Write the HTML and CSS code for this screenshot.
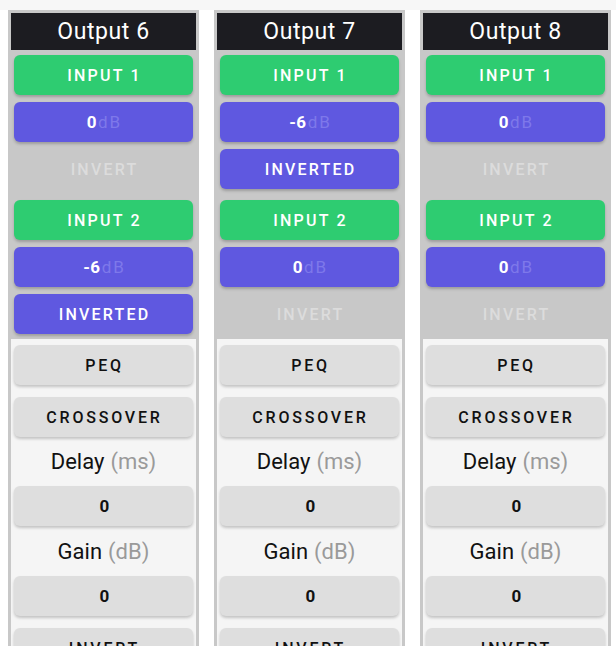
FILE: index.html
```html
<!DOCTYPE html>
<html>
<head>
<meta charset="utf-8">
<link rel="stylesheet" href="styles.css">
</head>
<body>
<div class="topstrip"></div>
<div class="outputs">
  <div class="col">
    <div class="title">Output 6</div>
    <div class="routing">
      <div class="group">
        <div class="btn green">INPUT 1</div>
        <div class="btn purple"><b>0</b><span class="unit">dB</span></div>
        <div class="btn off">INVERT</div>
      </div>
      <div class="group">
        <div class="btn green">INPUT 2</div>
        <div class="btn purple"><b>-6</b><span class="unit">dB</span></div>
        <div class="btn purple">INVERTED</div>
      </div>
    </div>
    <div class="proc">
      <div class="btn grey">PEQ</div>
      <div class="btn grey">CROSSOVER</div>
      <div class="label">Delay <span class="muted">(ms)</span></div>
      <div class="btn grey num">0</div>
      <div class="label">Gain <span class="muted">(dB)</span></div>
      <div class="btn grey num">0</div>
      <div class="btn grey last">INVERT</div>
    </div>
  </div>
  <div class="col">
    <div class="title">Output 7</div>
    <div class="routing">
      <div class="group">
        <div class="btn green">INPUT 1</div>
        <div class="btn purple"><b>-6</b><span class="unit">dB</span></div>
        <div class="btn purple">INVERTED</div>
      </div>
      <div class="group">
        <div class="btn green">INPUT 2</div>
        <div class="btn purple"><b>0</b><span class="unit">dB</span></div>
        <div class="btn off">INVERT</div>
      </div>
    </div>
    <div class="proc">
      <div class="btn grey">PEQ</div>
      <div class="btn grey">CROSSOVER</div>
      <div class="label">Delay <span class="muted">(ms)</span></div>
      <div class="btn grey num">0</div>
      <div class="label">Gain <span class="muted">(dB)</span></div>
      <div class="btn grey num">0</div>
      <div class="btn grey last">INVERT</div>
    </div>
  </div>
  <div class="col">
    <div class="title">Output 8</div>
    <div class="routing">
      <div class="group">
        <div class="btn green">INPUT 1</div>
        <div class="btn purple"><b>0</b><span class="unit">dB</span></div>
        <div class="btn off">INVERT</div>
      </div>
      <div class="group">
        <div class="btn green">INPUT 2</div>
        <div class="btn purple"><b>0</b><span class="unit">dB</span></div>
        <div class="btn off">INVERT</div>
      </div>
    </div>
    <div class="proc">
      <div class="btn grey">PEQ</div>
      <div class="btn grey">CROSSOVER</div>
      <div class="label">Delay <span class="muted">(ms)</span></div>
      <div class="btn grey num">0</div>
      <div class="label">Gain <span class="muted">(dB)</span></div>
      <div class="btn grey num">0</div>
      <div class="btn grey last">INVERT</div>
    </div>
  </div>
</div>
</body>
</html>
```

FILE: styles.css
```css
html, body {
  margin: 0;
  padding: 0;
  background: #ffffff;
  overflow: hidden;
}
body {
  font-family: Roboto, "Liberation Sans", sans-serif;
  height: 646px;
}
.topstrip {
  height: 10px;
  background: #f7f7f7;
}
.outputs {
  display: flex;
  gap: 15px;
  padding-left: 8px;
  align-items: flex-start;
}
.col {
  width: 185px;
  flex: none;
  border: 3px solid #c8c8c8;
  border-bottom: none;
  background: #c8c8c8;
}
.title {
  height: 37px;
  background: #1c1c21;
  color: #ffffff;
  font-size: 23px;
  font-weight: 400;
  display: flex;
  align-items: center;
  justify-content: center;
  letter-spacing: 0.6px;
}
.routing {
  padding: 5px 3px 5px 3px;
  display: flex;
  flex-direction: column;
  gap: 11px;
}
.group {
  display: flex;
  flex-direction: column;
  gap: 7px;
}
.btn {
  height: 40px;
  border-radius: 6px;
  display: flex;
  align-items: center;
  justify-content: center;
  font-size: 16px;
  font-weight: 500;
  letter-spacing: 2.2px;
  box-sizing: border-box;
  padding-left: 2px;
}
.green {
  background: #2ecc71;
  color: #ffffff;
  box-shadow: 0 2px 3px rgba(0, 0, 0, 0.22);
}
.purple {
  background: #5f58e0;
  color: #ffffff;
  box-shadow: 0 2px 3px rgba(0, 0, 0, 0.22);
}
.purple b {
  font-weight: 700;
  font-size: 17px;
  letter-spacing: 0.5px;
}
.unit {
  color: #7e78ea;
  font-weight: 400;
  font-size: 17px;
  letter-spacing: 2px;
  margin-left: 1px;
}
.off {
  color: #dcdcdc;
  background: transparent;
}
.proc {
  background: #f5f5f5;
  padding: 6px 3px 0 3px;
  display: flex;
  flex-direction: column;
}
.grey {
  background: #dedede;
  color: #111111;
  font-size: 16px;
  font-weight: 500;
  letter-spacing: 2.8px;
  box-shadow: 0 2px 3px rgba(0, 0, 0, 0.2);
}
.grey + .grey {
  margin-top: 12px;
}
.num {
  font-weight: 700;
  font-size: 17px;
  letter-spacing: 0;
}
.label {
  height: 49px;
  display: flex;
  align-items: center;
  justify-content: center;
  font-size: 22px;
  color: #111111;
}
.label + .btn + .label {
  height: 50px;
}
.muted {
  color: #9a9a9a;
  margin-left: 6px;
}
```
